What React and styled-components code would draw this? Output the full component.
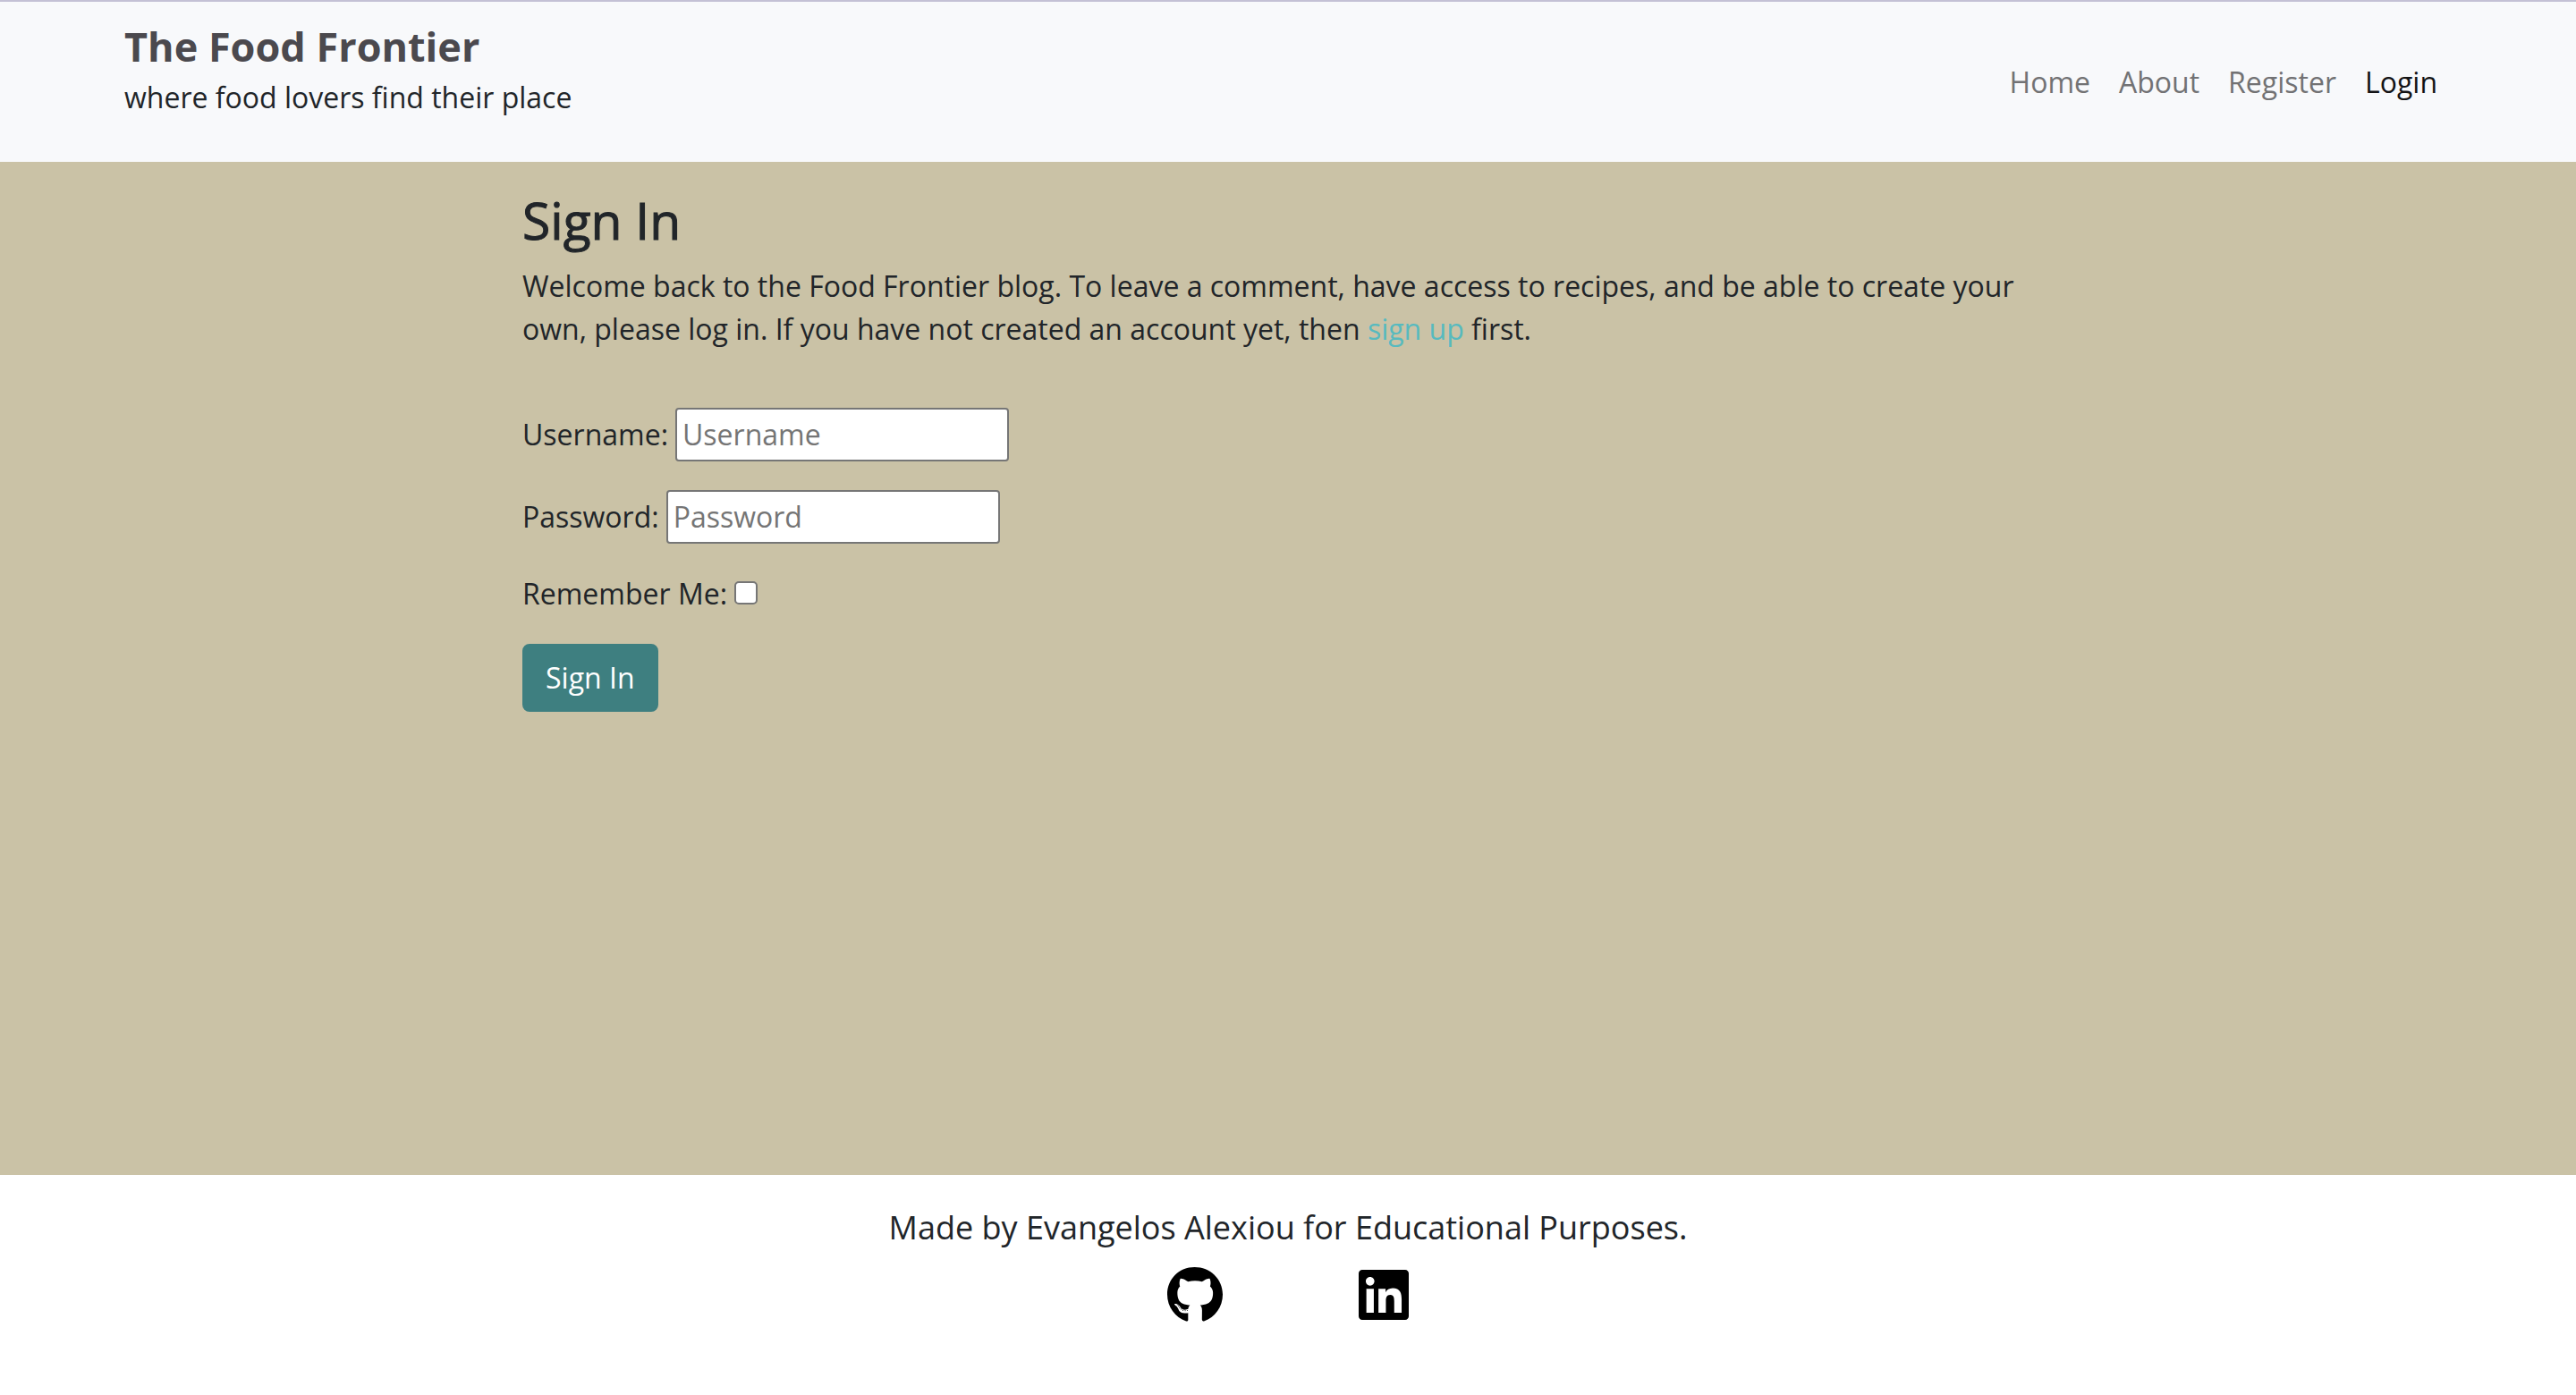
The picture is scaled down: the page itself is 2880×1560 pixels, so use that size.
import React from "react";
import styled, { createGlobalStyle } from "styled-components";
import { FaGithub, FaLinkedin } from "react-icons/fa6";

const GlobalStyle = createGlobalStyle`
  *, *::before, *::after { box-sizing: border-box; }
  body {
    margin: 0;
    background: #ffffff;
    color: #212529;
    font-family: "Open Sans", sans-serif;
    font-size: 32px;
    line-height: 48px;
  }
`;

const Page = styled.div`
  display: flex;
  flex-direction: column;
  min-height: 100vh;
`;

const Header = styled.header`
  display: flex;
  align-items: center;
  justify-content: space-between;
  padding: 16px 139px;
  border-top: 2px solid #c4c1d5;
  background: #f8f9fb;
`;

const Brand = styled.div`
  padding-bottom: 32px;
`;

const BrandLink = styled.a`
  display: block;
  color: #4b494e;
  font-size: 45px;
  font-weight: 700;
  line-height: 67px;
  text-decoration: none;
`;

const Tagline = styled.p`
  margin: 0;
`;

const Nav = styled.nav`
  display: flex;
  gap: 32px;
  padding-right: 16px;
`;

const NavLink = styled.a`
  color: ${({ $active }) => ($active ? "#131315" : "#727274")};
  text-decoration: none;
`;

const Main = styled.main`
  flex: 1;
  padding: 32px 24px;
  background: #cac2a6;
`;

const Column = styled.section`
  max-width: 1712px;
  margin: 0 auto;
`;

const Heading = styled.h1`
  margin: 0 0 16px;
  font-size: 57px;
  font-weight: 500;
  line-height: 67px;
  -webkit-text-stroke: 1px currentColor;
`;

const Intro = styled.p`
  margin: 0 0 64px;
`;

const InlineLink = styled.a`
  color: #57babf;
  text-decoration: none;
`;

const Form = styled.form`
  display: flex;
  flex-direction: column;
  align-items: flex-start;
  gap: 32px;
`;

const Field = styled.div`
  display: flex;
  align-items: center;
  gap: 8px;
`;

const TextInput = styled.input`
  width: 373px;
  height: 60px;
  padding: 2px 6px 4px;
  border: 2px solid #767676;
  border-radius: 4px;
  background: #ffffff;
  color: #212529;
  font: inherit;

  &::placeholder {
    color: #757575;
    opacity: 1;
  }
`;

const Checkbox = styled.input`
  appearance: none;
  width: 26px;
  height: 26px;
  margin: 0 0 2px;
  border: 2px solid #767676;
  border-radius: 5px;
  background: #ffffff;

  &:checked {
    background: #3e7f80;
  }
`;

const SubmitButton = styled.button`
  padding: 12px 24px;
  border: 2px solid #3e7f80;
  border-radius: 8px;
  background: #3e7f80;
  color: #ffffff;
  font: inherit;
  cursor: pointer;
`;

const Footer = styled.footer`
  display: flex;
  flex-direction: column;
  align-items: center;
  gap: 16px;
  padding: 32px 24px 80px;
`;

const Credit = styled.p`
  margin: 0;
  font-size: 36px;
  line-height: 54px;
`;

const SocialLinks = styled.div`
  display: flex;
  gap: 152px;
`;

const SocialLink = styled.a`
  display: block;
  width: ${({ $width }) => $width}px;
  height: 64px;
  color: #000000;

  svg {
    display: block;
    width: 100%;
    height: 100%;
  }
`;

const navItems = ["Home", "About", "Register", "Login"];

export default function App() {
  return (
    <>
      <GlobalStyle />
      <Page>
        <Header>
          <Brand>
            <BrandLink href="#home">The Food Frontier</BrandLink>
            <Tagline>where food lovers find their place</Tagline>
          </Brand>
          <Nav>
            {navItems.map((item) => (
              <NavLink
                key={item}
                href={`#${item.toLowerCase()}`}
                $active={item === "Login"}
              >
                {item}
              </NavLink>
            ))}
          </Nav>
        </Header>
        <Main>
          <Column>
            <Heading>Sign In</Heading>
            <Intro>
              Welcome back to the Food Frontier blog. To leave a comment, have
              access to recipes, and be able to create your own, please log in.
              If you have not created an account yet, then{" "}
              <InlineLink href="#register">sign up</InlineLink> first.
            </Intro>
            <Form onSubmit={(event) => event.preventDefault()}>
              <Field>
                <label htmlFor="username">Username:</label>
                <TextInput id="username" type="text" placeholder="Username" />
              </Field>
              <Field>
                <label htmlFor="password">Password:</label>
                <TextInput
                  id="password"
                  type="password"
                  placeholder="Password"
                />
              </Field>
              <Field>
                <label htmlFor="remember">Remember Me:</label>
                <Checkbox id="remember" type="checkbox" />
              </Field>
              <SubmitButton type="submit">Sign In</SubmitButton>
            </Form>
          </Column>
        </Main>
        <Footer>
          <Credit>Made by Evangelos Alexiou for Educational Purposes.</Credit>
          <SocialLinks>
            <SocialLink href="#github" aria-label="GitHub" $width={62}>
              <FaGithub />
            </SocialLink>
            <SocialLink href="#linkedin" aria-label="LinkedIn" $width={56}>
              <FaLinkedin />
            </SocialLink>
          </SocialLinks>
        </Footer>
      </Page>
    </>
  );
}
